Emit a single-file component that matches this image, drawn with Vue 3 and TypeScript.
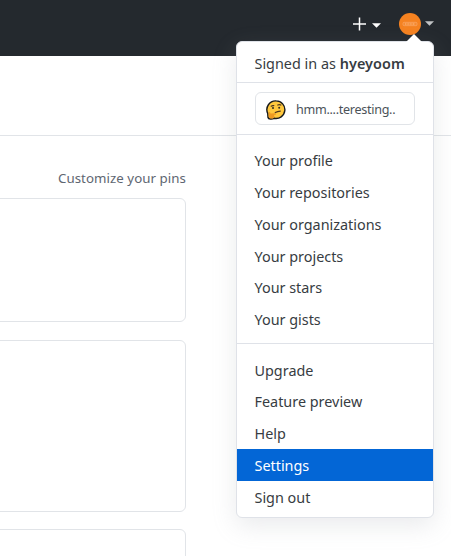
<script setup lang="ts">
interface MenuItem {
  label: string
  selected?: boolean
}

const user = 'hyeyoom'
const status = 'hmm....teresting..'

const personal: MenuItem[] = [
  { label: 'Your profile' },
  { label: 'Your repositories' },
  { label: 'Your organizations' },
  { label: 'Your projects' },
  { label: 'Your stars' },
  { label: 'Your gists' },
]

const account: MenuItem[] = [
  { label: 'Upgrade' },
  { label: 'Feature preview' },
  { label: 'Help' },
  { label: 'Settings', selected: true },
  { label: 'Sign out' },
]
</script>

<template>
  <div class="page">
    <header class="topbar">
      <button class="create" aria-label="Create new">
        <svg width="14" height="14" viewBox="0 0 14 14"><path d="M6.5 .5v13M0 7h13" stroke="#fff" stroke-width="1.5" /></svg>
        <svg width="9" height="5" viewBox="0 0 9 5"><path d="M0 .3h9L4.5 4.8z" fill="#fff" /></svg>
      </button>
      <button class="account" aria-label="Account">
        <svg width="22" height="22" viewBox="0 0 22 22">
          <circle cx="11" cy="11" r="11" fill="#f58220" />
          <rect x="4" y="9.3" width="14" height="3.4" rx="1.2" fill="#f58a30" stroke="#f9a869" stroke-width=".7" />
          <path d="M6 11h10" stroke="#fbbb86" stroke-width="1" stroke-dasharray="1 .6" />
        </svg>
        <svg width="9" height="5" viewBox="0 0 9 5"><path d="M0 .3h9L4.5 4.8z" fill="#c1c3c5" /></svg>
      </button>
    </header>

    <div class="subnav"></div>
    <main class="content">
      <a class="customize">Customize your pins</a>
      <section class="card first"></section>
      <section class="card second"></section>
      <section class="card third"></section>
    </main>

    <div class="menu">
      <div class="signed">Signed in as <strong>{{ user }}</strong></div>
      <div class="status-wrap">
        <button class="status">
          <svg width="20" height="20" viewBox="0 0 20 20">
            <path d="M10.2 .9a8.8 8.8 0 1 1-2 17.4C6 19.4 2.4 19.3 2 17.5L1.7 13.4A8.8 8.8 0 0 1 10.2 .9z" fill="#ffc83d" stroke="#17191b" stroke-width="1.4" />
            <circle cx="7" cy="8" r="1" fill="#332c25" />
            <circle cx="13.2" cy="7.7" r="1" fill="#332c25" />
            <path d="M5.2 6.2q1.2-.8 2.6-.5M11.8 5q1.6-.8 3.1 0M9.3 12.6q2.2-1.3 5-1.5" fill="none" stroke="#4b351d" stroke-width="1.2" stroke-linecap="round" />
            <path d="M2.7 12.2c.9-.8 1.8.2 1.8 1.4l4.6-.4c1.4-.1 1.5 1.2.3 1.5l-1.7.4c1.4.5.8 3.2-.9 3.3-2.3.4-4-.3-4.1-2z" fill="#ed9a22" />
          </svg>
          <span>{{ status }}</span>
        </button>
      </div>
      <nav class="group personal">
        <a v-for="item in personal" :key="item.label" class="item">{{ item.label }}</a>
      </nav>
      <nav class="group">
        <a v-for="item in account" :key="item.label" class="item" :class="{ selected: item.selected }">{{ item.label }}</a>
      </nav>
    </div>
  </div>
</template>

<style>
body {
  margin: 0;
  background: #fff;
}
</style>

<style scoped>
* {
  box-sizing: border-box;
}
.page {
  position: relative;
  width: 451px;
  height: 556px;
  overflow: hidden;
  background: #fff;
  color: #373c42;
  font-family: "Noto Sans", "Open Sans", sans-serif;
  font-size: 14.4px;
}
button {
  padding: 0;
  border: 0;
  background: none;
  font: inherit;
  color: inherit;
}
svg {
  display: block;
  flex: none;
}
.topbar {
  display: flex;
  justify-content: flex-end;
  gap: 18px;
  height: 56px;
  padding: 13px 17px 0 0;
  background: #24292e;
}
.create,
.account {
  display: flex;
  align-items: center;
  height: 22px;
}
.create {
  gap: 5px;
}
.create svg:last-child {
  margin-top: 2px;
}
.account {
  gap: 4px;
}
.account svg:last-child {
  margin-bottom: 2px;
}
.subnav {
  height: 80px;
  border-bottom: 1px solid #e1e4e8;
}
.content {
  width: 187px;
  padding-top: 32px;
  margin-left: -1px;
}
.customize {
  display: block;
  height: 20px;
  margin-bottom: 10px;
  line-height: 20px;
  font-size: 13.3px;
  letter-spacing: 0.05px;
  text-align: right;
  white-space: nowrap;
  color: #5e6671;
}
.card {
  border: 1px solid #e1e4e8;
  border-radius: 0 6px 6px 0;
  margin-bottom: 18px;
}
.first {
  height: 124px;
}
.second {
  height: 172px;
  margin-bottom: 17px;
}
.third {
  height: 60px;
}
.menu {
  position: absolute;
  top: 41px;
  left: 236px;
  width: 198px;
  height: 477px;
  background: #fff;
  border: 1px solid #dfe2e8;
  border-radius: 6px;
  box-shadow: 0 8px 24px rgba(149, 157, 165, 0.2);
}
.menu::before {
  content: "";
  position: absolute;
  top: -8px;
  right: 11px;
  border: 8px solid transparent;
  border-top: 0;
  border-bottom-color: #fff;
}
.signed {
  height: 41px;
  padding-left: 17.5px;
  line-height: 43px;
  white-space: nowrap;
  border-bottom: 1px solid #dfe2e8;
}
.signed strong {
  font-weight: 600;
  letter-spacing: 0.1px;
}
.status-wrap {
  height: 52px;
  padding: 9px 18px 0;
  border-bottom: 1px solid #dfe2e8;
}
.status {
  display: flex;
  align-items: center;
  gap: 10px;
  width: 160px;
  height: 33px;
  padding: 2px 0 0 10px;
  border: 1px solid #e1e4e8;
  border-radius: 6px;
  font-size: 12.6px;
  letter-spacing: -0.3px;
  color: #4b5259;
}
.group {
  padding-top: 9.6px;
}
.personal {
  height: 209px;
  padding-top: 9.2px;
  border-bottom: 1px solid #dfe2e8;
}
.item {
  display: block;
  height: 31.8px;
  padding-left: 17.5px;
  line-height: 34px;
  white-space: nowrap;
}
.selected {
  background: #0366d6;
  color: #fff;
}
</style>
